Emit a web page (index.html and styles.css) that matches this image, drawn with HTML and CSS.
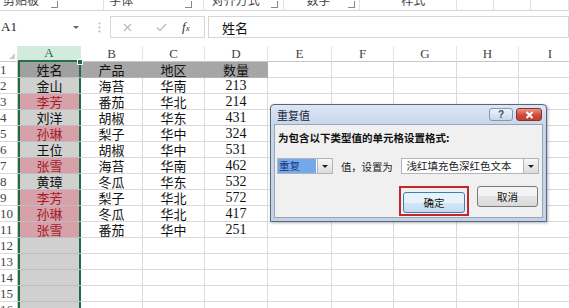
FILE: index.html
```html
<!DOCTYPE html>
<html lang="zh-CN">
<head>
    <meta charset="UTF-8">
    <title>重复值</title>
    <link rel="stylesheet" href="styles.css">
</head>
<body>
    <!-- リボン下端（グループ名） -->
    <div class="ribbon">
        <div class="grp g1"><span>剪贴板</span><i class="launch"></i></div>
        <div class="grp g2"><span>字体</span><i class="launch"></i></div>
        <div class="grp g3"><span>对齐方式</span><i class="launch"></i></div>
        <div class="grp g4"><span>数字</span><i class="launch"></i></div>
        <div class="grp g5"><span>样式</span></div>
        <div class="grp g6"></div>
        <div class="grp g7"></div>
        <div class="grp g8"></div>
    </div>

    <!-- 数式バー -->
    <div class="fbar">
        <div class="namebox"><span>A1</span><i class="caret"></i></div>
        <div class="dots">
            <svg width="3" height="11" viewBox="0 0 3 11"><circle cx="1.5" cy="1.5" r="1" fill="#b5b5b5"/><circle cx="1.5" cy="5.5" r="1" fill="#b5b5b5"/><circle cx="1.5" cy="9.5" r="1" fill="#b5b5b5"/></svg>
        </div>
        <div class="fxbox">
            <svg class="ico-x" width="9" height="9" viewBox="0 0 9 9"><path d="M1 1 L8 8 M8 1 L1 8" stroke="#bdbdbd" stroke-width="1.3"/></svg>
            <svg class="ico-ok" width="11" height="9" viewBox="0 0 11 9"><path d="M1 4.5 L4 7.5 L10 1" stroke="#bdbdbd" stroke-width="1.4" fill="none"/></svg>
            <span class="fx"><i>f</i><small>x</small></span>
        </div>
        <div class="formula">姓名</div>
    </div>

    <!-- シート -->
    <div class="sheet">
        <div class="row hdr">
            <div class="corner"><svg width="6" height="6" viewBox="0 0 6 6"><path d="M6 0 L6 6 L0 6 Z" fill="#cfcfcf"/></svg></div>
            <div class="sel">A</div><div>B</div><div>C</div><div>D</div><div>E</div><div>F</div><div>G</div><div>H</div><div>I</div>
        </div>
        <div class="row">
            <div class="rh">1</div><div class="a h1 active">姓名</div><div class="h1">产品</div><div class="h1">地区</div><div class="h1">数量</div><div></div><div></div><div></div><div></div><div></div>
        </div>
        <div class="row">
            <div class="rh">2</div><div class="a">金山</div><div>海苔</div><div>华南</div><div class="num">213</div><div></div><div></div><div></div><div></div><div></div>
        </div>
        <div class="row">
            <div class="rh">3</div><div class="a dup">李芳</div><div>番茄</div><div>华北</div><div class="num">214</div><div></div><div></div><div></div><div></div><div></div>
        </div>
        <div class="row">
            <div class="rh">4</div><div class="a">刘洋</div><div>胡椒</div><div>华东</div><div class="num">431</div><div></div><div></div><div></div><div></div><div></div>
        </div>
        <div class="row">
            <div class="rh">5</div><div class="a dup">孙琳</div><div>梨子</div><div>华中</div><div class="num">324</div><div></div><div></div><div></div><div></div><div></div>
        </div>
        <div class="row">
            <div class="rh">6</div><div class="a">王位</div><div>胡椒</div><div>华中</div><div class="num">531</div><div></div><div></div><div></div><div></div><div></div>
        </div>
        <div class="row">
            <div class="rh">7</div><div class="a dup">张雪</div><div>海苔</div><div>华南</div><div class="num">462</div><div></div><div></div><div></div><div></div><div></div>
        </div>
        <div class="row">
            <div class="rh">8</div><div class="a">黄璋</div><div>冬瓜</div><div>华东</div><div class="num">532</div><div></div><div></div><div></div><div></div><div></div>
        </div>
        <div class="row">
            <div class="rh">9</div><div class="a dup">李芳</div><div>梨子</div><div>华北</div><div class="num">572</div><div></div><div></div><div></div><div></div><div></div>
        </div>
        <div class="row">
            <div class="rh">10</div><div class="a dup">孙琳</div><div>冬瓜</div><div>华北</div><div class="num">417</div><div></div><div></div><div></div><div></div><div></div>
        </div>
        <div class="row">
            <div class="rh">11</div><div class="a dup">张雪</div><div>番茄</div><div>华中</div><div class="num">251</div><div></div><div></div><div></div><div></div><div></div>
        </div>
        <div class="row">
            <div class="rh">12</div><div class="a"></div><div></div><div></div><div></div><div></div><div></div><div></div><div></div><div></div>
        </div>
        <div class="row">
            <div class="rh">13</div><div class="a"></div><div></div><div></div><div></div><div></div><div></div><div></div><div></div><div></div>
        </div>
        <div class="row">
            <div class="rh">14</div><div class="a"></div><div></div><div></div><div></div><div></div><div></div><div></div><div></div><div></div>
        </div>
        <div class="row">
            <div class="rh">15</div><div class="a"></div><div></div><div></div><div></div><div></div><div></div><div></div><div></div><div></div>
        </div>
        <div class="row">
            <div class="rh">16</div><div class="a"></div><div></div><div></div><div></div><div></div><div></div><div></div><div></div><div></div>
        </div>
    </div>

    <!-- 重复值 ダイアログ -->
    <div class="dialog">
        <div class="dtitle">
            <span>重复值</span>
            <div class="tbtns">
                <div class="tb help">?</div>
                <div class="tb close">
                    <svg width="9" height="8" viewBox="0 0 9 8"><path d="M1.5 1 L7.5 7 M7.5 1 L1.5 7" stroke="#fff" stroke-width="2"/></svg>
                </div>
            </div>
        </div>
        <div class="dbody">
            <div class="dhead">为包含以下类型值的单元格设置格式:</div>
            <div class="drow">
                <div class="combo c1"><span class="hi">重复</span><i class="ddbtn"></i></div>
                <span class="lbl">值，设置为</span>
                <div class="combo c2"><span class="val">浅红填充色深红色文本</span><i class="ddbtn"></i></div>
            </div>
            <div class="dfoot">
                <div class="hl"><div class="btn def">确定</div></div>
                <div class="btn">取消</div>
            </div>
        </div>
    </div>
</body>
</html>
```

FILE: styles.css
```css
/* 全体 */
body {
    margin: 0;
    width: 569px;
    height: 308px;
    overflow: hidden;
    background: #fff;
    font-family: "Noto Sans CJK SC", sans-serif;
    color: #111;
}

/* リボン */
.ribbon {
    display: flex;
    height: 10px;
    overflow: hidden;
    border-bottom: 1px solid #d5d5d5;
    font-size: 12px;
    color: #444;
}

.grp {
    display: flex;
    align-items: flex-end;
    box-sizing: border-box;
    height: 10px;
    border-right: 1px solid #e2e2e2;
}

.grp span {
    line-height: 14px;
    margin-bottom: 3px;
}

.launch {
    width: 6px;
    height: 6px;
    margin-bottom: 2px;
    border-right: 1px solid #888;
    border-bottom: 1px solid #888;
}

.g1 { width: 110px; }
.g1 span { margin-left: 3px; }
.g1 .launch { margin-left: 12px; }
.g2 { width: 105px; }
.g2 span { margin-left: 5px; }
.g2 .launch { margin-left: auto; margin-right: 11px; }
.g3 { width: 85px; }
.g3 span { margin-left: 8px; }
.g3 .launch { margin-left: auto; margin-right: 5px; }
.g4 { width: 80px; }
.g4 span { margin-left: 22px; }
.g4 .launch { margin-left: auto; margin-right: 4px; }
.g5 { width: 102px; }
.g5 span { margin-left: 41px; }
.g6, .g7 { width: 39px; }
.g8 { width: 40px; }

/* 数式バー */
.fbar {
    display: flex;
    height: 22px;
    margin-top: 5px;
}

.namebox {
    width: 88px;
    display: flex;
    align-items: center;
    justify-content: space-between;
    box-sizing: border-box;
    padding: 0 9px 0 1px;
    font-family: "Liberation Serif", serif;
    font-size: 13px;
    color: #222;
}

.caret {
    width: 0;
    height: 0;
    border-left: 3px solid transparent;
    border-right: 3px solid transparent;
    border-top: 3px solid #666;
}

.dots {
    width: 22px;
    display: flex;
    align-items: center;
    justify-content: center;
}

.fxbox {
    width: 95px;
    display: flex;
    align-items: center;
    box-sizing: border-box;
    border: 1px solid #d6d6d6;
}

.ico-x { margin-left: 12px; }
.ico-ok { margin-left: 24px; }

.fx {
    margin-left: 15px;
    font-family: "Liberation Serif", serif;
    font-size: 13px;
    color: #333;
}

.fx small {
    font-size: 9px;
    font-style: italic;
}

.formula {
    flex: 1;
    margin-left: 3px;
    display: flex;
    align-items: center;
    padding-left: 13px;
    border: 1px solid #d6d6d6;
    font-size: 13px;
}

/* シート */
.sheet {
    margin-top: 8px;
}

.row {
    display: grid;
    grid-template-columns: 18px 63px 62px 62px 63px 64px 62px 63px 62px 63px;
    height: 16px;
}

.row > div {
    box-sizing: border-box;
    border-right: 1px solid #dadada;
    border-bottom: 1px solid #dadada;
    text-align: center;
    line-height: 15px;
    font-size: 13px;
    white-space: nowrap;
    overflow: hidden;
}

.hdr > div {
    font-family: "Liberation Serif", serif;
    font-size: 13px;
    color: #444;
    border-right-color: #e4e4e4;
    border-bottom-color: #c8c8c8;
}

.corner {
    display: flex;
    align-items: flex-end;
    justify-content: flex-end;
    padding: 0 2px 2px 0;
}

.hdr .sel {
    background: #d3ebdc;
    color: #1f6b41;
    border-bottom: 2px solid #217346;
    line-height: 14px;
}

.row > .rh {
    text-align: left;
    font-family: "Liberation Serif", serif;
    font-size: 13px;
    color: #444;
    border-right-color: #c8c8c8;
    overflow: visible;
}

.row > .num {
    font-family: "Liberation Serif", serif;
    font-size: 14px;
}

.row > .h1 {
    background: #a6a6a6;
    border-right-color: transparent;
    border-bottom-color: #b4b4b4;
}

/* 選択中の A 列 */
.row > .a {
    background: #d0d0d0;
    border-right: none;
    border-bottom-color: #bdbdbd;
    box-shadow: inset 2px 0 #1f6b41, inset -2px 0 #1f6b41;
}

.row > .a.h1 {
    background: #a0a0a0;
}

.row > .a.dup {
    background: #d6a1a9;
    color: #a11d2b;
}

.row > .active {
    position: relative;
    overflow: visible;
}

.active::after {
    content: "";
    position: absolute;
    right: -2px;
    top: -3px;
    width: 4px;
    height: 4px;
    background: #1f6b41;
    border: 1px solid #fff;
}

/* ダイアログ */
.dialog {
    position: absolute;
    left: 270px;
    top: 104px;
    width: 277px;
    height: 118px;
    box-sizing: border-box;
    display: flex;
    flex-direction: column;
    padding: 0 3px 3px;
    border: 1px solid #56667c;
    border-radius: 4px 4px 0 0;
    background: linear-gradient(#dce7f5, #c7d6ea 20px, #c3d2e6);
    box-shadow: 1px 1px 3px rgba(0, 0, 0, 0.3);
}

.dtitle {
    height: 19px;
    display: flex;
    align-items: center;
    padding-left: 3px;
    font-size: 11px;
    color: #1b2536;
}

.tbtns {
    display: flex;
    gap: 3px;
    margin-left: auto;
    margin-right: 1px;
}

.tb {
    height: 13px;
    box-sizing: border-box;
    border-radius: 3px;
    display: flex;
    align-items: center;
    justify-content: center;
}

.help {
    width: 24px;
    border: 1px solid #8597b2;
    background: linear-gradient(#eef3fa, #c9d6e8);
    font-family: "Liberation Sans", sans-serif;
    font-size: 10px;
    font-weight: bold;
    color: #3b4c66;
}

.close {
    width: 26px;
    border: 1px solid #8c3026;
    background: linear-gradient(#e9978d, #cc4b3b 55%, #c43e2e);
}

.dbody {
    flex: 1;
    display: flex;
    flex-direction: column;
    padding: 6px 4px 0 2px;
    background: #f0f0f0;
    border: 1px solid #98a6b9;
    font-size: 10.5px;
    white-space: nowrap;
}

.dhead {
    margin-left: 1px;
    line-height: 14px;
    font-weight: bold;
    color: #111;
}

.drow {
    display: flex;
    align-items: center;
    height: 16px;
    margin-top: 13px;
    color: #222;
}

.combo {
    display: flex;
    flex-shrink: 0;
    align-items: stretch;
    height: 16px;
    box-sizing: border-box;
    border: 1px solid #b2b4b8;
    background: #fff;
}

.c1 { width: 56px; }
.c2 { width: 138px; margin-left: 8px; }

.hi {
    width: 37px;
    background: #74a8ea;
    color: #17337a;
    line-height: 14px;
    padding-left: 1px;
}

.val {
    flex: 1;
    padding-left: 5px;
    line-height: 14px;
}

.ddbtn {
    width: 15px;
    margin-left: auto;
    box-sizing: border-box;
    border-left: 1px solid #b5b5b5;
    background: linear-gradient(#f6f6f6, #dcdcdc);
    display: flex;
    align-items: center;
    justify-content: center;
}

.ddbtn::before {
    content: "";
    border-left: 3px solid transparent;
    border-right: 3px solid transparent;
    border-top: 3px solid #222;
}

.lbl {
    flex-shrink: 0;
    margin-left: 8px;
    letter-spacing: -0.2px;
}

.dfoot {
    display: flex;
    justify-content: flex-end;
    align-items: flex-start;
    gap: 8px;
    margin-top: 12px;
}

.hl {
    padding: 4px 2px 1px;
    border: 2px solid #c4262e;
}

.btn {
    width: 61px;
    height: 21px;
    box-sizing: border-box;
    display: flex;
    align-items: center;
    justify-content: center;
    border: 1px solid #7a7a7a;
    border-radius: 3px;
    background: linear-gradient(#f4f4f4 50%, #e4e4e4 50%, #d9d9d9);
    color: #111;
}

.btn.def {
    width: 62px;
    border-color: #3c7fb1;
    background: linear-gradient(#e8f2fa 50%, #d5e7f5 50%, #c4dcef);
}
```
